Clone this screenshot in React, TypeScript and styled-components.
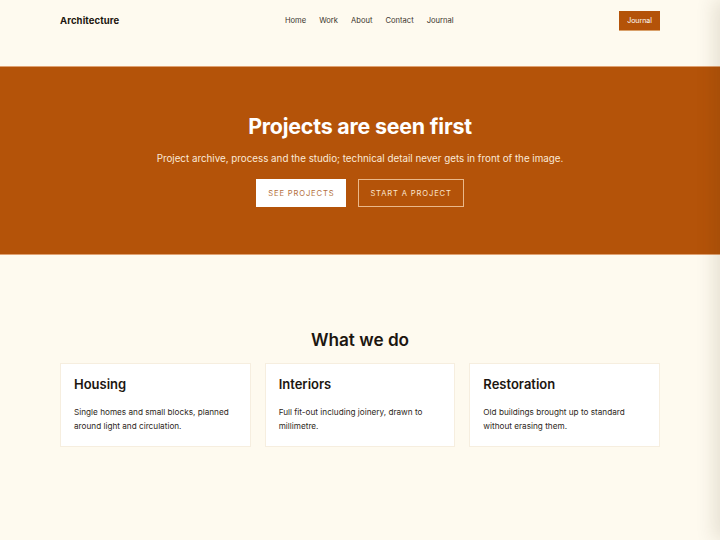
import styled, { createGlobalStyle } from 'styled-components';

const GlobalStyle = createGlobalStyle`
  html, body {
    margin: 0;
    padding: 0;
    background: #fefaef;
    font-family: Inter, 'Noto Sans', sans-serif;
    color: #1c1610;
    overflow: hidden;
  }
  * { box-sizing: border-box; }
`;

const Container = styled.div`
  width: 600px;
  margin: 0 auto;
`;

const Header = styled.header`
  height: 66px;
`;

const HeaderRow = styled(Container)`
  display: flex;
  justify-content: space-between;
  align-items: center;
  height: 41px;
`;

const Logo = styled.div`
  font-size: 9.5px;
  font-weight: 700;
  letter-spacing: 0.1px;
`;

const Nav = styled.nav`
  display: flex;
  gap: 13px;
  font-size: 7.6px;
  color: #3c352e;
`;

const HeaderButton = styled.a`
  background: #b45309;
  color: #fff;
  font-size: 7px;
  padding: 5px 8px 5px;
  border-bottom: 1px solid #d9a06a;
`;

const Hero = styled.section`
  background: #b45309;
  border-top: 1px solid #e0a272;
  border-bottom: 1px solid #e0a272;
  height: 189px;
  display: flex;
  flex-direction: column;
  align-items: center;
  padding-top: 46px;
  color: #fff;
`;

const HeroTitle = styled.h1`
  margin: 0;
  font-size: 21.4px;
  font-weight: 700;
  letter-spacing: -0.2px;
`;

const HeroText = styled.p`
  margin: 14px 0 0;
  font-size: 9.8px;
  color: #fbe9d8;
`;

const Actions = styled.div`
  display: flex;
  gap: 12px;
  margin-top: 15px;
`;

const ActionButton = styled.a<{ $solid?: boolean }>`
  height: 28px;
  display: flex;
  align-items: center;
  padding: 0 11px;
  font-size: 7.6px;
  letter-spacing: 0.85px;
  background: ${p => (p.$solid ? '#fff' : 'transparent')};
  color: ${p => (p.$solid ? '#b4703c' : '#fbe5d0')};
  border: 1.5px solid ${p => (p.$solid ? '#fff' : '#eab88a')};
`;

const Services = styled.section`
  padding-top: 74px;
`;

const SectionTitle = styled.h2`
  margin: 0 0 13px;
  text-align: center;
  font-size: 17.2px;
  font-weight: 600;
`;

const Cards = styled(Container)`
  display: grid;
  grid-template-columns: repeat(3, 1fr);
  gap: 14px;
`;

const Card = styled.div`
  background: #fff;
  border: 1px solid #f6eedf;
  height: 84px;
  padding: 12px 13px;
`;

const CardTitle = styled.h3`
  margin: 0 0 13px;
  font-size: 13px;
  font-weight: 600;
`;

const CardText = styled.p`
  margin: 0;
  font-size: 8.2px;
  line-height: 14px;
  color: #2e2822;
`;

const Drawer = styled.aside`
  position: fixed;
  top: 0;
  left: 100%;
  width: 280px;
  height: 100vh;
  background: #fefaef;
  box-shadow: -6px 0 18px rgba(60, 40, 10, 0.12);
`;

const services = [
  { title: 'Housing', text: 'Single homes and small blocks, planned around light and circulation.' },
  { title: 'Interiors', text: 'Full fit-out including joinery, drawn to millimetre.' },
  { title: 'Restoration', text: 'Old buildings brought up to standard without erasing them.' },
];

export default function App() {
  return (
    <>
      <GlobalStyle />
      <Header>
        <HeaderRow>
          <Logo>Architecture</Logo>
          <Nav>
            <span>Home</span>
            <span>Work</span>
            <span>About</span>
            <span>Contact</span>
            <span>Journal</span>
          </Nav>
          <HeaderButton>Journal</HeaderButton>
        </HeaderRow>
      </Header>
      <Hero>
        <HeroTitle>Projects are seen first</HeroTitle>
        <HeroText>Project archive, process and the studio; technical detail never gets in front of the image.</HeroText>
        <Actions>
          <ActionButton $solid>SEE PROJECTS</ActionButton>
          <ActionButton>START A PROJECT</ActionButton>
        </Actions>
      </Hero>
      <Services>
        <SectionTitle>What we do</SectionTitle>
        <Cards>
          {services.map(s => (
            <Card key={s.title}>
              <CardTitle>{s.title}</CardTitle>
              <CardText>{s.text}</CardText>
            </Card>
          ))}
        </Cards>
      </Services>
      <Drawer />
    </>
  );
}
